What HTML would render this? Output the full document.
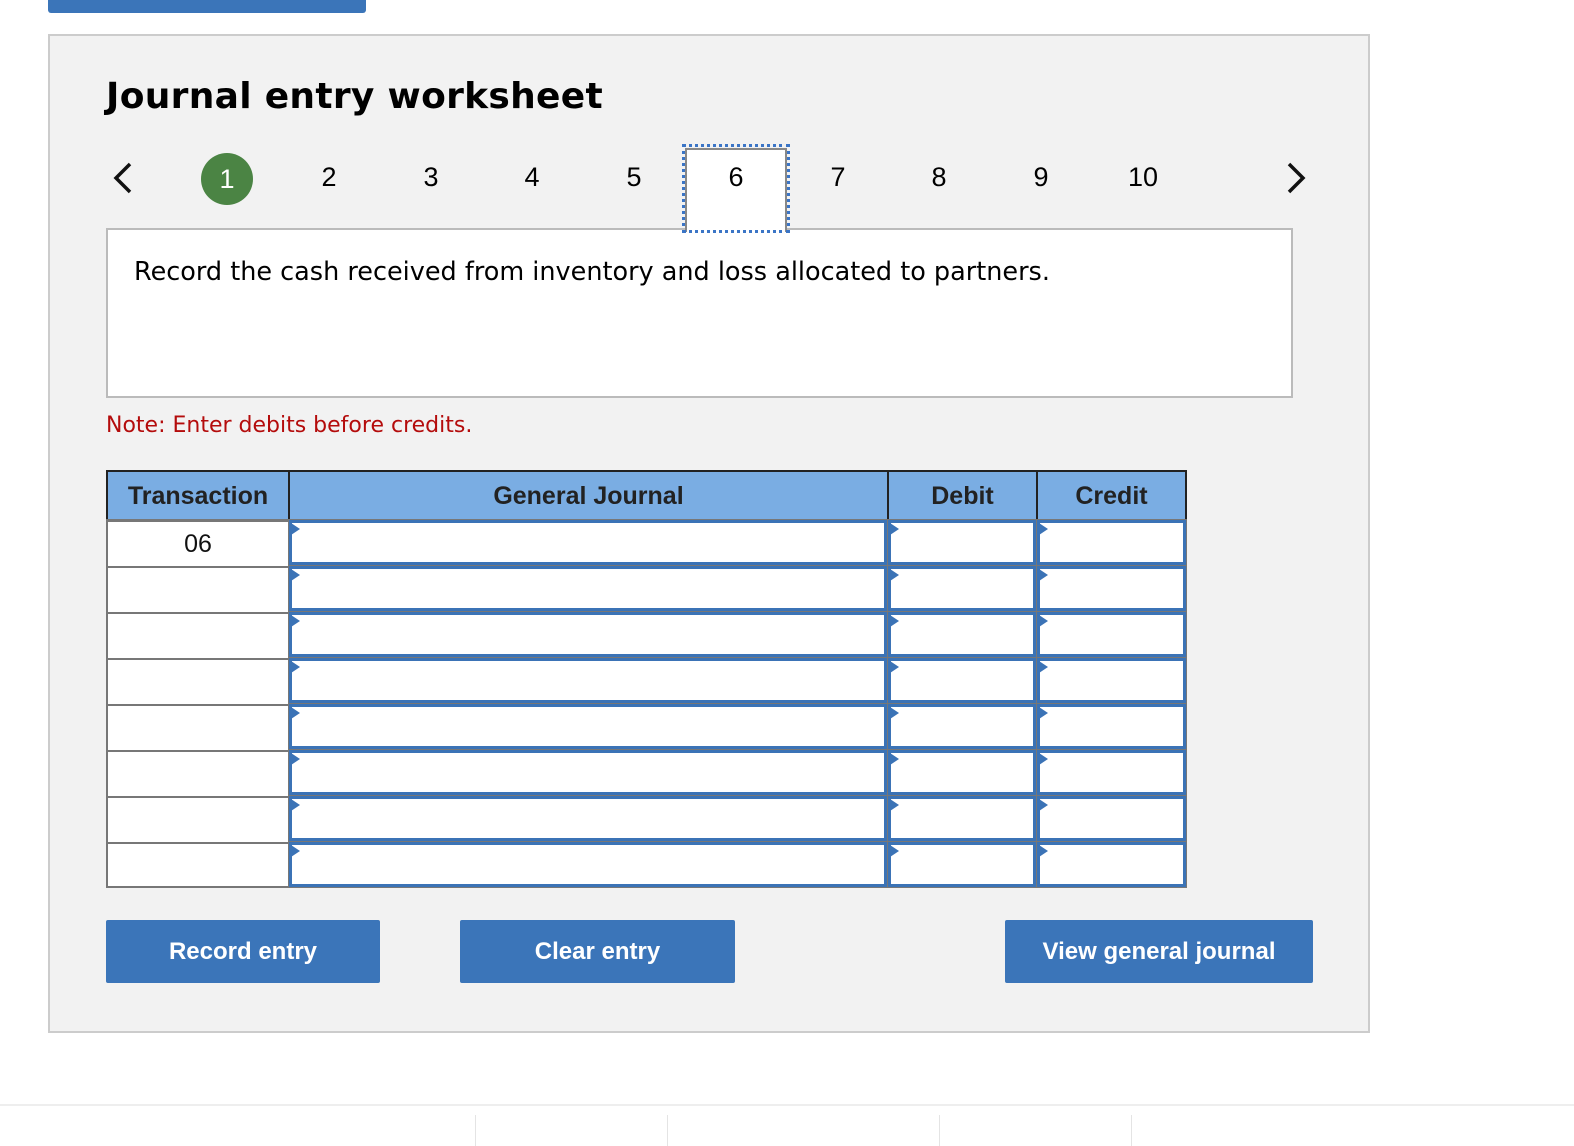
<!DOCTYPE html>
<html><head><meta charset="utf-8"><style>
*{margin:0;padding:0;box-sizing:border-box}
body{width:1574px;height:1146px;background:#fff;position:relative;overflow:hidden;font-family:"Liberation Sans",sans-serif}
.a{position:absolute}
.v{font-family:"DejaVu Sans",Verdana,sans-serif}
.num{position:absolute;top:162px;font-size:27px;color:#000;width:40px;text-align:center}
.hd{position:absolute;top:470px;height:51px;background:#7aade3;border:2px solid #222;font-weight:bold;font-size:25px;color:#222;text-align:center;line-height:48px}
.c{position:absolute;background:#fff;border:2px solid #777}
.btn{position:absolute;top:920px;height:63px;background:#3b75b9;color:#fff;font-weight:bold;font-size:24px;text-align:center;line-height:63px;border-radius:2px}
</style></head><body>
<div class="a" style="left:48px;top:0;width:318px;height:13px;background:#3b75b9;border-radius:0 0 3px 3px"></div>
<div class="a" style="left:48px;top:34px;width:1322px;height:999px;background:#f2f2f2;border:2px solid #ccc"></div>
<div class="a v" style="left:106px;top:76px;font-size:36px;font-weight:bold;color:#000;letter-spacing:0.3px">Journal entry worksheet</div>
<svg class="a" style="left:110px;top:160px" width="24" height="36"><path d="M20 4 L6 18 L20 32" stroke="#111" stroke-width="3.5" fill="none"/></svg>
<svg class="a" style="left:1284px;top:160px" width="24" height="36"><path d="M5 4 L19 18 L5 32" stroke="#111" stroke-width="3.5" fill="none"/></svg>
<div class="a" style="left:201px;top:153px;width:52px;height:52px;border-radius:50%;background:#4b8444;color:#fff;font-size:27px;text-align:center;line-height:52px">1</div>
<div class="num" style="left:309px">2</div>
<div class="num" style="left:411px">3</div>
<div class="num" style="left:512px">4</div>
<div class="num" style="left:614px">5</div>
<div class="a" style="left:106px;top:228px;width:1187px;height:170px;background:#fff;border:2px solid #bbb"></div>
<div class="a" style="left:685px;top:148px;width:102px;height:84px;background:#fff;border:2px solid #888;border-bottom:none"></div>
<div class="a" style="left:682px;top:144px;width:108px;height:89px;border:3px dotted #3b75c6"></div>
<div class="num" style="left:716px">6</div>
<div class="num" style="left:818px">7</div>
<div class="num" style="left:919px">8</div>
<div class="num" style="left:1021px">9</div>
<div class="num" style="left:1123px">10</div>
<div class="a v" style="left:134px;top:257px;font-size:25.5px;color:#000;white-space:nowrap">Record the cash received from inventory and loss allocated to partners.</div>
<div class="a v" style="left:106px;top:413px;font-size:22px;color:#b40c0c;white-space:nowrap">Note: Enter debits before credits.</div>
<div class="hd" style="left:106px;width:184px">Transaction</div>
<div class="hd" style="left:288px;width:601px">General Journal</div>
<div class="hd" style="left:887px;width:151px">Debit</div>
<div class="hd" style="left:1036px;width:151px">Credit</div>
<div class="a" style="left:106px;top:519px;width:1081px;height:369px;background:#777"></div>
<div class="c" style="left:106px;top:520px;width:184px;height:48px;font-size:25px;text-align:center;line-height:44px;color:#111">06</div>
<div class="c" style="left:106px;top:566px;width:184px;height:48px"></div>
<div class="c" style="left:106px;top:612px;width:184px;height:48px"></div>
<div class="c" style="left:106px;top:658px;width:184px;height:48px"></div>
<div class="c" style="left:106px;top:704px;width:184px;height:48px"></div>
<div class="c" style="left:106px;top:750px;width:184px;height:48px"></div>
<div class="c" style="left:106px;top:796px;width:184px;height:48px"></div>
<div class="c" style="left:106px;top:842px;width:184px;height:46px"></div>
<svg class="a" style="left:0;top:0" width="1574" height="1146">
<g fill="#fff" stroke="#3b73b6" stroke-width="3">
<rect x="290.5" y="521.5" width="595" height="42"/><rect x="889.5" y="521.5" width="145" height="42"/><rect x="1038.5" y="521.5" width="146" height="42"/>
<rect x="290.5" y="567.5" width="595" height="42"/><rect x="889.5" y="567.5" width="145" height="42"/><rect x="1038.5" y="567.5" width="146" height="42"/>
<rect x="290.5" y="613.5" width="595" height="42"/><rect x="889.5" y="613.5" width="145" height="42"/><rect x="1038.5" y="613.5" width="146" height="42"/>
<rect x="290.5" y="659.5" width="595" height="42"/><rect x="889.5" y="659.5" width="145" height="42"/><rect x="1038.5" y="659.5" width="146" height="42"/>
<rect x="290.5" y="705.5" width="595" height="42"/><rect x="889.5" y="705.5" width="145" height="42"/><rect x="1038.5" y="705.5" width="146" height="42"/>
<rect x="290.5" y="751.5" width="595" height="42"/><rect x="889.5" y="751.5" width="145" height="42"/><rect x="1038.5" y="751.5" width="146" height="42"/>
<rect x="290.5" y="797.5" width="595" height="42"/><rect x="889.5" y="797.5" width="145" height="42"/><rect x="1038.5" y="797.5" width="146" height="42"/>
<rect x="290.5" y="843.5" width="595" height="42"/><rect x="889.5" y="843.5" width="145" height="42"/><rect x="1038.5" y="843.5" width="146" height="42"/>
</g>
<g fill="#3b73b6">
<path d="M291 523l9 6-9 6z"/><path d="M890 523l9 6-9 6z"/><path d="M1039 523l9 6-9 6z"/>
<path d="M291 569l9 6-9 6z"/><path d="M890 569l9 6-9 6z"/><path d="M1039 569l9 6-9 6z"/>
<path d="M291 615l9 6-9 6z"/><path d="M890 615l9 6-9 6z"/><path d="M1039 615l9 6-9 6z"/>
<path d="M291 661l9 6-9 6z"/><path d="M890 661l9 6-9 6z"/><path d="M1039 661l9 6-9 6z"/>
<path d="M291 707l9 6-9 6z"/><path d="M890 707l9 6-9 6z"/><path d="M1039 707l9 6-9 6z"/>
<path d="M291 753l9 6-9 6z"/><path d="M890 753l9 6-9 6z"/><path d="M1039 753l9 6-9 6z"/>
<path d="M291 799l9 6-9 6z"/><path d="M890 799l9 6-9 6z"/><path d="M1039 799l9 6-9 6z"/>
<path d="M291 845l9 6-9 6z"/><path d="M890 845l9 6-9 6z"/><path d="M1039 845l9 6-9 6z"/>
</g>
<rect x="0" y="1104" width="1574" height="2" fill="#eee"/>
<g fill="#e4e4e4"><rect x="475" y="1115" width="1" height="31"/><rect x="667" y="1115" width="1" height="31"/><rect x="939" y="1115" width="1" height="31"/><rect x="1131" y="1115" width="1" height="31"/></g>
</svg>
<div class="btn" style="left:106px;width:274px">Record entry</div>
<div class="btn" style="left:460px;width:275px">Clear entry</div>
<div class="btn" style="left:1005px;width:308px">View general journal</div>
</body></html>
